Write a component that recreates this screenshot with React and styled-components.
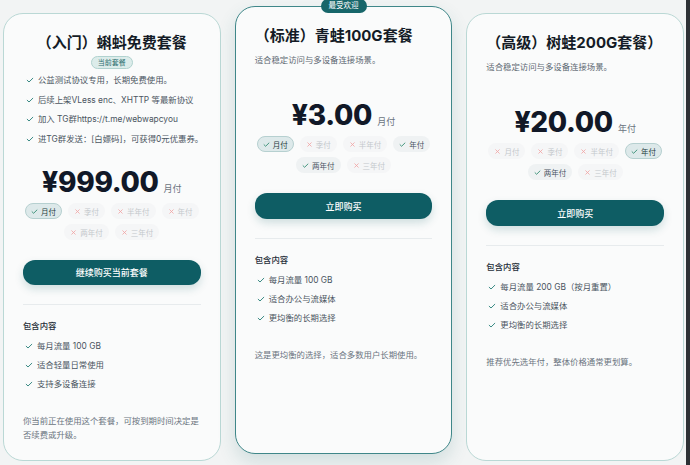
import React from 'react'
import styled, { createGlobalStyle, css } from 'styled-components'

const GlobalStyle = createGlobalStyle`
  html, body {
    margin: 0;
    padding: 0;
    background: #f2f4f4;
  }
  body {
    font-family: "Inter", "Noto Sans CJK SC", sans-serif;
    color: #1c2430;
  }
`

const CYCLES = ['月付', '季付', '半年付', '年付', '两年付', '三年付']

const plans = [
  {
    id: 'free',
    title: '（入门）蝌蚪免费套餐',
    centered: true,
    current: true,
    bullets: [
      '公益测试协议专用，长期免费使用。',
      '后续上架VLess enc、XHTTP 等最新协议',
      '加入 TG群https://t.me/webwapcyou',
      '进TG群发送：[白嫖码]，可获得0元优惠券。',
    ],
    price: '¥999.00',
    per: '月付',
    selected: '月付',
    enabled: ['月付'],
    action: '继续购买当前套餐',
    features: ['每月流量 100 GB', '适合轻量日常使用', '支持多设备连接'],
    note: '你当前正在使用这个套餐，可按到期时间决定是否续费或升级。',
  },
  {
    id: 'std',
    title: '（标准）青蛙100G套餐',
    featured: true,
    desc: '适合稳定访问与多设备连接场景。',
    price: '¥3.00',
    per: '月付',
    selected: '月付',
    enabled: ['月付', '年付', '两年付'],
    action: '立即购买',
    features: ['每月流量 100 GB', '适合办公与流媒体', '更均衡的长期选择'],
    note: '这是更均衡的选择，适合多数用户长期使用。',
  },
  {
    id: 'pro',
    title: '（高级）树蛙200G套餐）',
    desc: '适合稳定访问与多设备连接场景。',
    price: '¥20.00',
    per: '年付',
    selected: '年付',
    enabled: ['年付', '两年付'],
    action: '立即购买',
    features: ['每月流量 200 GB（按月重置）', '适合办公与流媒体', '更均衡的长期选择'],
    note: '推荐优先选年付，整体价格通常更划算。',
  },
]

const CheckIcon = ({ size = 8 }) => (
  <svg width={size} height={size} viewBox="0 0 12 12" fill="none">
    <path d="M1.8 6.4l2.7 2.6L10.2 3.4" stroke="currentColor" strokeWidth="1.5" strokeLinecap="round" strokeLinejoin="round" />
  </svg>
)

const CrossIcon = () => (
  <svg width="7" height="7" viewBox="0 0 12 12" fill="none">
    <path d="M3 3l6 6M9 3l-6 6" stroke="currentColor" strokeWidth="1.4" strokeLinecap="round" />
  </svg>
)

function PlanCard({ plan }) {
  return (
    <Card featured={plan.featured}>
      {plan.featured && <Ribbon>最受欢迎</Ribbon>}

      <Header>
        <Title centered={plan.centered}>{plan.title}</Title>
        {plan.current && <CurrentBadge>当前套餐</CurrentBadge>}
        {plan.desc && <Desc>{plan.desc}</Desc>}
        {plan.bullets && (
          <Bullets>
            {plan.bullets.map((b) => (
              <Bullet key={b}>
                <Tick><CheckIcon /></Tick>
                <span>{b}</span>
              </Bullet>
            ))}
          </Bullets>
        )}
      </Header>

      <PriceRow>
        <Amount>{plan.price}</Amount>
        <Per>{plan.per}</Per>
      </PriceRow>

      <Cycles>
        {CYCLES.map((c) => {
          const state = c === plan.selected ? 'selected' : plan.enabled.includes(c) ? 'enabled' : 'disabled'
          return (
            <Cycle key={c} state={state}>
              <CycleMark state={state}>
                {state === 'disabled' ? <CrossIcon /> : <CheckIcon size={7} />}
              </CycleMark>
              {c}
            </Cycle>
          )
        })}
      </Cycles>

      <BuyButton type="button">{plan.action}</BuyButton>

      <Divider />

      <SectionLabel>包含内容</SectionLabel>
      <Features>
        {plan.features.map((f) => (
          <Bullet key={f}>
            <Tick><CheckIcon /></Tick>
            <span>{f}</span>
          </Bullet>
        ))}
      </Features>

      <Note>{plan.note}</Note>
    </Card>
  )
}

export default function App() {
  return (
    <>
      <GlobalStyle />
      <Page>
        <Board>
          {plans.map((p) => <PlanCard key={p.id} plan={p} />)}
        </Board>
        <ScrollTrack />
      </Page>
    </>
  )
}

const Page = styled.div`
  display: flex;
  height: 465px;
  overflow: hidden;
`
const Board = styled.main`
  flex: 1;
  display: flex;
  align-items: stretch;
  gap: 14px;
  padding: 13px 2px 4px 3px;
  box-sizing: border-box;
`
const ScrollTrack = styled.div`
  width: 4px;
  background: #2d3135;
`
const Card = styled.section`
  flex: 1;
  min-width: 0;
  position: relative;
  display: flex;
  flex-direction: column;
  box-sizing: border-box;
  padding: 18px 19px;
  border: 1px solid #bad8d5;
  border-radius: 20px;
  background: #fafbfb;

  ${(p) => p.featured && css`
    border: 1.5px solid #3f8789;
    transform: translateY(-7px);
    box-shadow: 0 8px 18px rgba(40, 110, 112, 0.16);
  `}
`
const Ribbon = styled.div`
  position: absolute;
  top: -8px;
  left: 50%;
  transform: translateX(-50%);
  height: 14px;
  padding: 0 8px;
  border-radius: 7px;
  background: #17666a;
  color: #fff;
  font-size: 7.5px;
  line-height: 14px;
  white-space: nowrap;
`
const Header = styled.div`
  display: flex;
  flex-direction: column;
  min-height: 48px;
`
const Title = styled.h2`
  margin: 0;
  font-size: 15px;
  line-height: 21px;
  font-weight: 700;
  color: #141b26;
  white-space: nowrap;
  text-align: ${(p) => (p.centered ? 'center' : 'left')};
`
const CurrentBadge = styled.span`
  align-self: center;
  margin-top: 3px;
  height: 13px;
  box-sizing: border-box;
  padding: 0 6px;
  border: 1px solid #b0d2cf;
  border-radius: 7px;
  background: #dcecea;
  color: #2d6e6f;
  font-size: 7px;
  line-height: 11px;
`
const Desc = styled.p`
  margin: 7px 0 0;
  font-size: 8.4px;
  line-height: 14px;
  color: #5d6872;
`
const Bullets = styled.ul`
  list-style: none;
  margin: 4px 0 0;
  padding: 0 0 0 3px;
  display: flex;
  flex-direction: column;
  gap: 5.5px;
`
const Bullet = styled.li`
  display: flex;
  align-items: center;
  gap: 4px;
  font-size: 8.4px;
  line-height: 14px;
  color: #4a5561;
  white-space: nowrap;
`
const Tick = styled.span`
  display: inline-flex;
  color: #3a8a84;
`
const PriceRow = styled.div`
  display: flex;
  justify-content: center;
  align-items: baseline;
  gap: 5px;
  margin-top: 28px;
  line-height: 28px;
`
const Amount = styled.span`
  font-size: 28px;
  font-weight: 800;
  letter-spacing: -0.3px;
  color: #111827;
`
const Per = styled.span`
  font-size: 9px;
  color: #6b7480;
`
const Cycles = styled.div`
  display: flex;
  flex-wrap: wrap;
  justify-content: center;
  gap: 5px 6px;
  margin-top: 0;
`
const cycleLook = {
  selected: css`
    border-color: #b6d0d0;
    background: #dde9ea;
    color: #1f3b40;
  `,
  enabled: css`
    background: #eff2f3;
    color: #4b5563;
  `,
  disabled: css`
    background: #f5f6f7;
    color: #c4c8cc;
  `,
}
const Cycle = styled.span`
  display: inline-flex;
  align-items: center;
  gap: 3px;
  height: 16px;
  box-sizing: border-box;
  padding: 0 5px;
  border: 1px solid transparent;
  border-radius: 8px;
  font-size: 7.5px;
  white-space: nowrap;
  ${(p) => cycleLook[p.state]}
`
const CycleMark = styled.span`
  display: inline-flex;
  color: ${(p) => (p.state === 'disabled' ? '#f2a3a3' : '#2f8a6f')};
`
const BuyButton = styled.button`
  margin-top: 20px;
  width: 100%;
  height: 26px;
  border: none;
  border-radius: 12px;
  background: #0e5d64;
  color: #fff;
  font-family: inherit;
  font-size: 9px;
  font-weight: 500;
  box-shadow: 0 4px 8px rgba(14, 93, 100, 0.18);
`
const Divider = styled.hr`
  margin: 19px 0 0;
  height: 1px;
  border: none;
  background: #e7ebed;
`
const SectionLabel = styled.div`
  margin-top: 14px;
  font-size: 8.4px;
  line-height: 14px;
  font-weight: 500;
  color: #252d38;
`
const Features = styled.ul`
  list-style: none;
  margin: 6px 0 0;
  padding: 0 0 0 2px;
  display: flex;
  flex-direction: column;
  gap: 5px;
`
const Note = styled.p`
  margin: 23px 0 0;
  font-size: 8.4px;
  line-height: 14px;
  color: #6a7480;
`
